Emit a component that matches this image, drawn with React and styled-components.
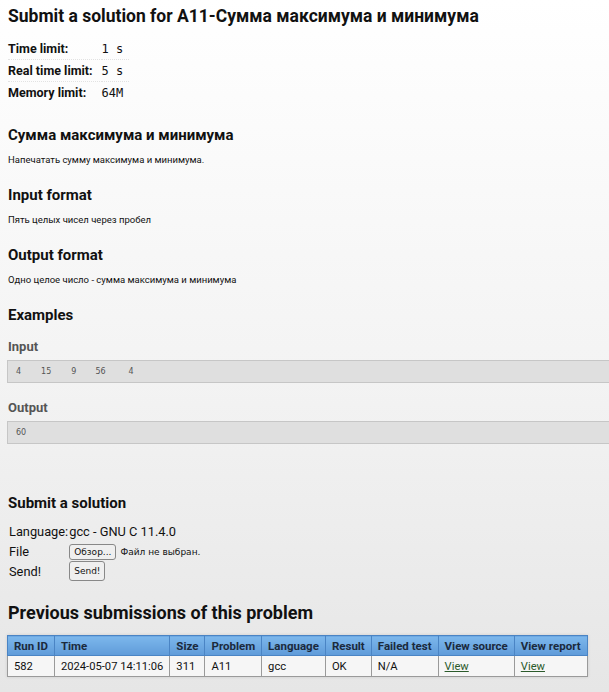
import React from 'react';
import styled, { createGlobalStyle } from 'styled-components';

const GlobalStyle = createGlobalStyle`
  html, body {
    margin: 0;
    padding: 0;
  }
  body {
    min-height: 692px;
    overflow-x: hidden;
    background: linear-gradient(to bottom, #ffffff 0px, #f3f3f3 380px, #e6e6e6 692px);
    font-family: Roboto, "Liberation Sans", sans-serif;
    color: #111;
  }
`;

const Page = styled.div`
  padding: 6px 0 10px 8px;
`;

const Title = styled.h1`
  font-size: 17.5px;
  font-weight: bold;
  margin: 0 0 12px;
  color: #111;
`;

const Limits = styled.table`
  border-collapse: collapse;
  font-size: 12.5px;

  th {
    text-align: left;
    font-weight: bold;
    padding: 0 9px 0 0;
    height: 21px;
    white-space: nowrap;
  }
  td {
    font-family: "DejaVu Sans Mono", monospace;
    font-size: 12px;
    padding: 0;
    width: 27px;
  }
  tr + tr th,
  tr + tr td {
    border-top: 1px dotted #e2e2e2;
  }
`;

const Heading = styled.h2`
  font-size: 15px;
  font-weight: bold;
  margin: ${(p) => p.$top || 21}px 0 0;
  color: #111;
`;

const Text = styled.p`
  font-size: 9.5px;
  margin: 10px 0 0;
`;

const SubHeading = styled.h3`
  font-size: 13px;
  font-weight: bold;
  color: #555;
  margin: ${(p) => p.$top || 17}px 0 6px;
`;

const Sample = styled.div`
  width: 700px;
  height: 23px;
  box-sizing: border-box;
  margin-left: -1px;
  background: #dfdfdf;
  border: 1px solid #c6c6c6;
  display: flex;
  align-items: center;
  padding-left: 8px;
  font-family: "DejaVu Sans", sans-serif;
  font-size: 8px;
  color: #555;
`;

const Num = styled.span`
  margin-right: ${(p) => p.$gap}px;
`;

const SubmitForm = styled.table`
  border-collapse: collapse;
  margin-top: 9px;
  font-size: 12.8px;

  td {
    padding: 0 0 0 1px;
    height: 20px;
    vertical-align: middle;
  }
`;

const FileButton = styled.button`
  font-family: "DejaVu Sans", sans-serif;
  font-size: 9px;
  padding: 1px 4px;
  height: 16px;
  border: 1px solid #888;
  border-radius: 3px;
  background: #efefef;
  color: #111;
`;

const SendButton = styled(FileButton)`
  height: 20px;
  padding: 1px 4px;
`;

const FileNote = styled.span`
  font-family: "DejaVu Sans", sans-serif;
  font-size: 9px;
  margin-left: 4px;
`;

const BigHeading = styled.h2`
  font-size: 18px;
  font-weight: bold;
  margin: 21px 0 12px;
`;

const Submissions = styled.table`
  border-collapse: collapse;
  margin-left: -1px;
  font-size: 11.2px;
  box-shadow: 0 0 3px rgba(0, 0, 0, 0.12);

  th {
    background: linear-gradient(to bottom, #7cb7ec, #5f9bd9);
    border: 1px solid #4a84c4;
    color: #1b2a3d;
    font-size: 11.5px;
    font-weight: bold;
    text-align: left;
    padding: 0 6px;
    height: 19px;
    white-space: nowrap;
  }
  td {
    background: #f6f6f6;
    border: 1px solid #9a9a9a;
    padding: 0 6px;
    height: 20px;
    white-space: nowrap;
  }
  a {
    color: #2b5a2b;
    text-decoration: underline;
  }
`;

export default function App() {
  return (
    <Page>
      <GlobalStyle />
      <Title>Submit a solution for A11-Сумма максимума и минимума</Title>
      <Limits>
        <tbody>
          <tr>
            <th>Time limit:</th>
            <td>1 s</td>
          </tr>
          <tr>
            <th>Real time limit:</th>
            <td>5 s</td>
          </tr>
          <tr>
            <th>Memory limit:</th>
            <td>64M</td>
          </tr>
        </tbody>
      </Limits>

      <Heading $top={23}>Сумма максимума и минимума</Heading>
      <Text>Напечатать сумму максимума и минимума.</Text>

      <Heading>Input format</Heading>
      <Text>Пять целых чисел через пробел</Text>

      <Heading>Output format</Heading>
      <Text>Одно целое число - сумма максимума и минимума</Text>

      <Heading>Examples</Heading>
      <SubHeading $top={15}>Input</SubHeading>
      <Sample>
        <Num $gap={20}>4</Num>
        <Num $gap={20}>15</Num>
        <Num $gap={19}>9</Num>
        <Num $gap={23}>56</Num>
        <Num $gap={0}>4</Num>
      </Sample>
      <SubHeading>Output</SubHeading>
      <Sample>60</Sample>

      <Heading $top={50}>Submit a solution</Heading>
      <SubmitForm>
        <tbody>
          <tr>
            <td>Language:</td>
            <td>gcc - GNU C 11.4.0</td>
          </tr>
          <tr>
            <td>File</td>
            <td>
              <FileButton>Обзор...</FileButton>
              <FileNote>Файл не выбран.</FileNote>
            </td>
          </tr>
          <tr>
            <td>Send!</td>
            <td>
              <SendButton>Send!</SendButton>
            </td>
          </tr>
        </tbody>
      </SubmitForm>

      <BigHeading>Previous submissions of this problem</BigHeading>
      <Submissions>
        <thead>
          <tr>
            <th>Run ID</th>
            <th>Time</th>
            <th>Size</th>
            <th>Problem</th>
            <th>Language</th>
            <th>Result</th>
            <th>Failed test</th>
            <th>View source</th>
            <th>View report</th>
          </tr>
        </thead>
        <tbody>
          <tr>
            <td>582</td>
            <td>2024-05-07 14:11:06</td>
            <td>311</td>
            <td>A11</td>
            <td>gcc</td>
            <td>OK</td>
            <td>N/A</td>
            <td><a href="#source">View</a></td>
            <td><a href="#report">View</a></td>
          </tr>
        </tbody>
      </Submissions>
    </Page>
  );
}
